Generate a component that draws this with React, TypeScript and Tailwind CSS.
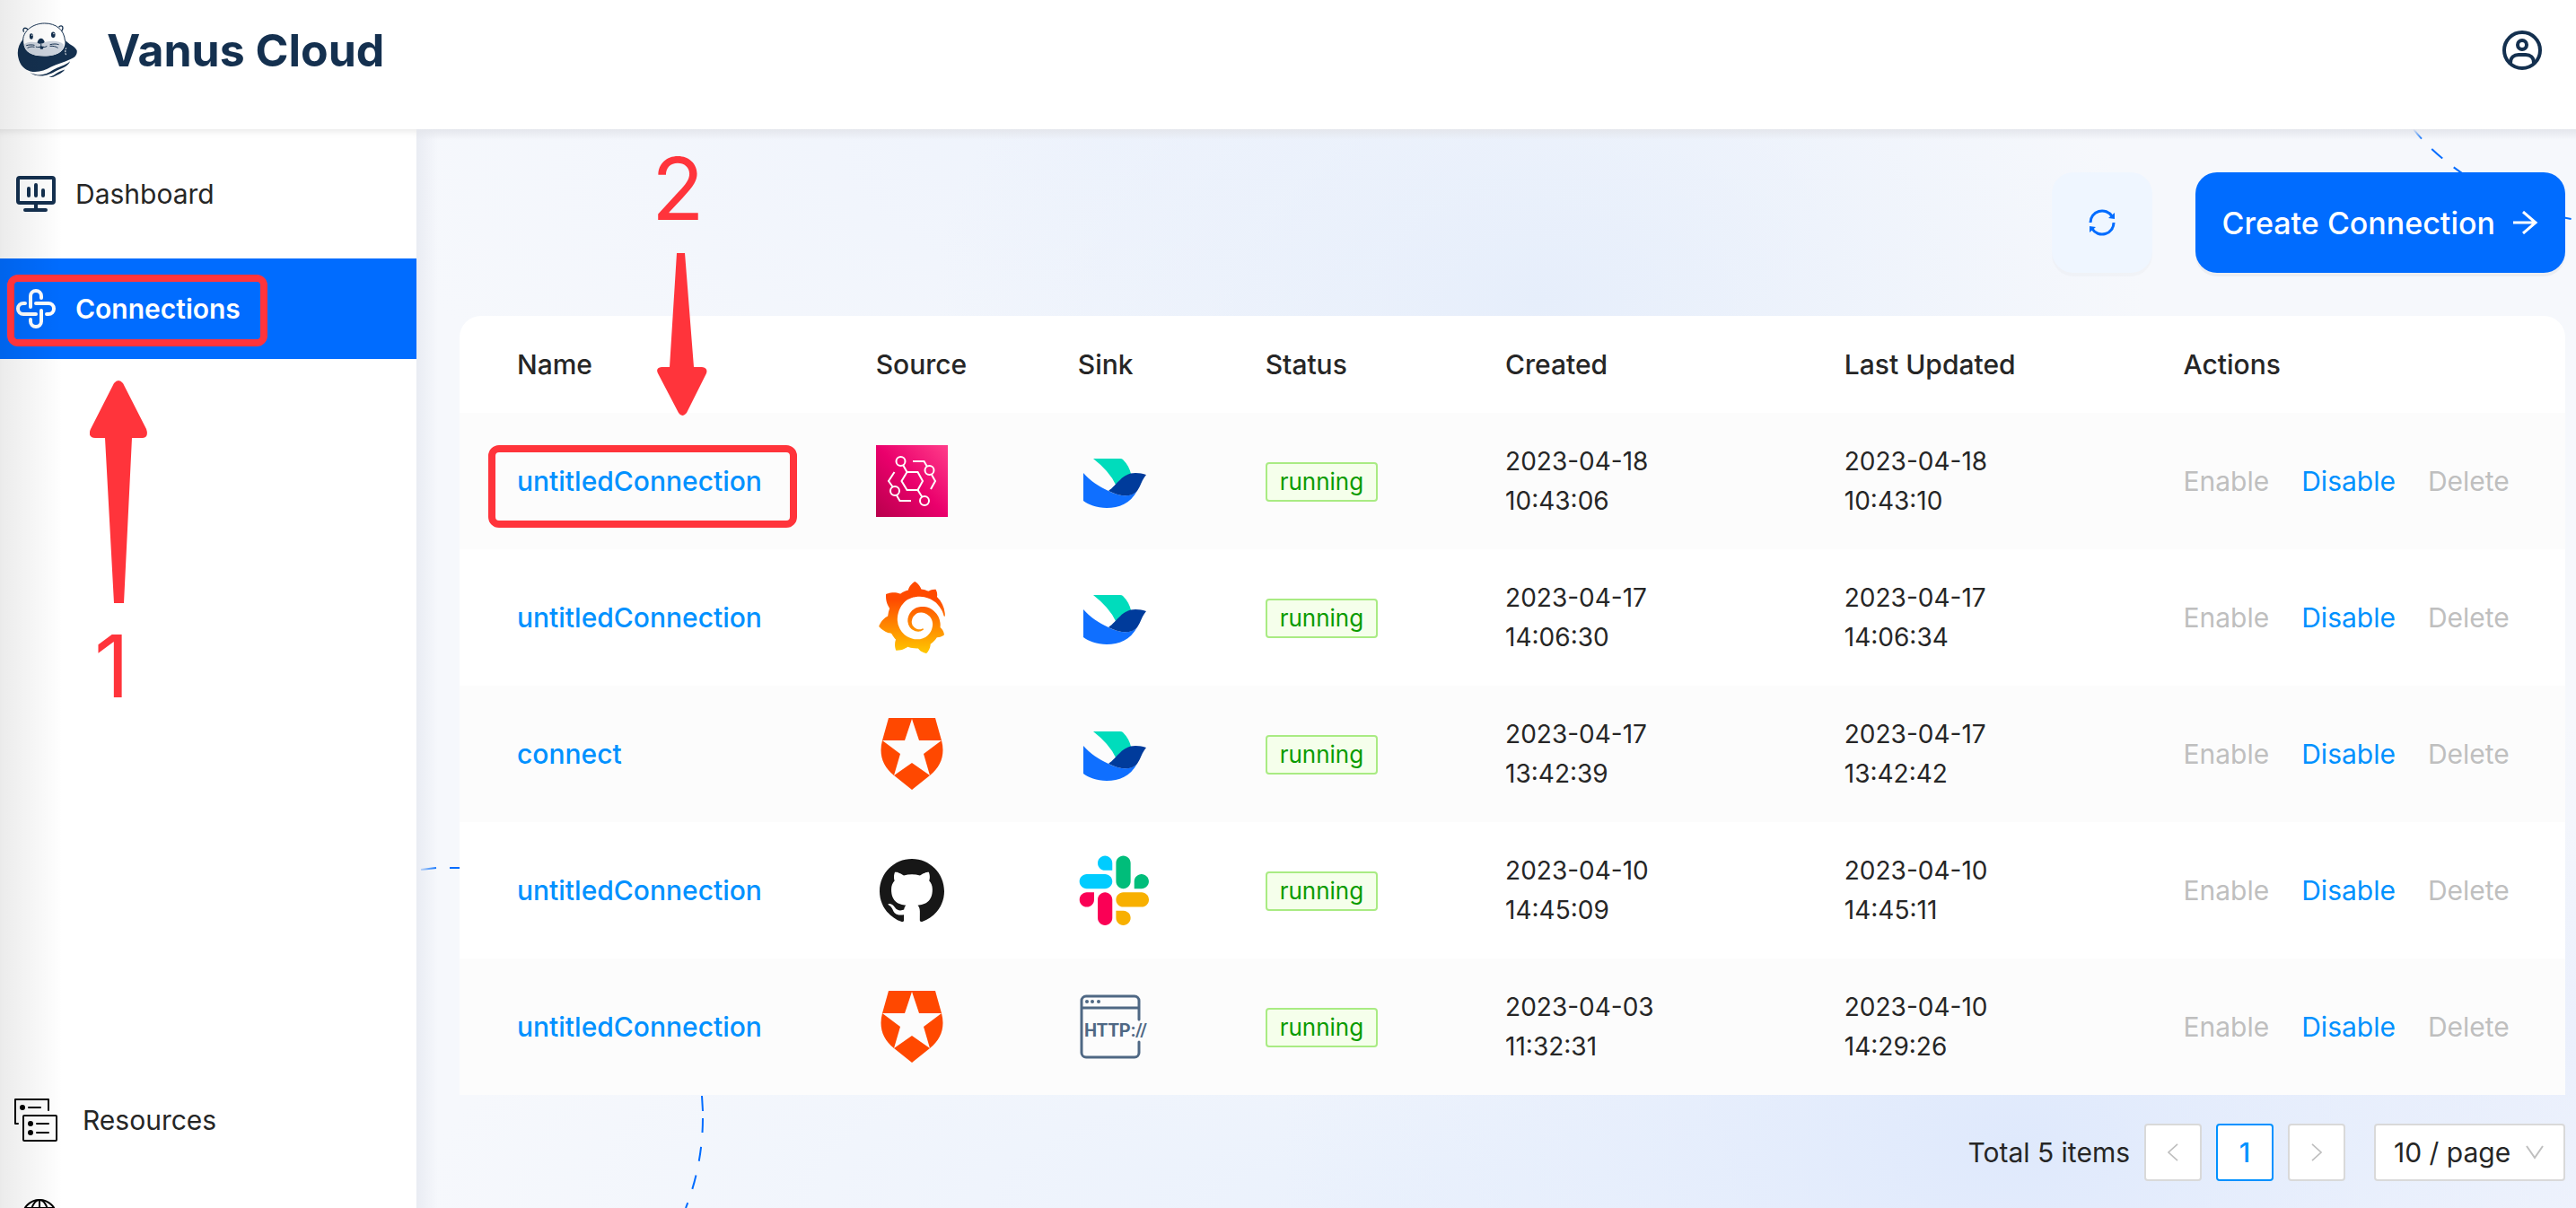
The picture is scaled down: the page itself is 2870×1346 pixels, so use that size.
import React from "react";
import { SiGithub, SiGrafana } from "react-icons/si";

function OtterLogo() {
  return (
    <svg viewBox="26 22 204 188" className="h-[62px] w-[68px]" aria-hidden="true">
      <path
        d="M46 78C30 96 24 118 29 140C34 166 50 181 70 187C96 192 118 184 140 172C160 162 186 156 205 146C220 142 229 130 227 117C222 102 200 98 184 78Z"
        fill="#14304f"
      />
      <path
        d="M48 54c-4-6-2-13 4-13 4 0 7 2 9 5M166 38c4-5 11-6 13-1 2 5-1 10-3 14"
        fill="#fff"
        stroke="#14304f"
        strokeWidth="4"
      />
      <path
        d="M47 92C42 52 78 25 118 25C160 25 186 48 187 88C188 120 160 135 116 136C74 136 50 122 47 92Z"
        fill="#fff"
      />
      <path
        d="M45 88C42 52 78 25 118 25C156 25 184 46 187 84"
        fill="none"
        stroke="#14304f"
        strokeWidth="3"
      />
      <path
        d="M48 98C58 84 84 86 105 94C130 82 168 82 182 96C184 124 154 135 116 135C74 135 52 122 48 98Z"
        fill="#cdd4de"
      />
      <ellipse cx="73" cy="69" rx="6" ry="10" fill="#14304f" />
      <ellipse cx="147" cy="64" rx="7" ry="10" fill="#14304f" />
      <circle cx="75" cy="65" r="2" fill="#fff" />
      <circle cx="149" cy="60" r="2" fill="#fff" />
      <path d="M93 90C96 80 101 76 106 76C111 76 117 82 118 89C112 95 99 96 93 90Z" fill="#14304f" />
      <path d="M101 103h14l-3 9h-8z" fill="#14304f" />
      <path
        d="M106 94v9M88 104c7 3 13 2 18-1c7 4 14 3 20-1M56 100c10-3 20-3 28-1M60 108c8-4 16-5 24-3M136 97c12-3 22-3 30 0M136 102c10-1 20 1 27 6"
        fill="none"
        stroke="#14304f"
        strokeWidth="3"
      />
      <path d="M191 108c-4 6-4 18 0 26" fill="none" stroke="#fff" strokeWidth="3" strokeDasharray="6 3" />
      <path
        d="M68 190C96 206 122 200 146 183C166 170 188 168 204 153C198 170 178 176 160 184C136 198 98 214 68 190Z"
        fill="#14304f"
      />
      <path d="M133 206C150 204 156 190 186 181C178 194 164 196 152 204C146 208 139 208 133 206Z" fill="#14304f" />
    </svg>
  );
}

function UserIcon() {
  return (
    <svg viewBox="0 0 44 44" className="size-11" fill="none" stroke="#14304f" strokeWidth="4" aria-hidden="true">
      <circle cx="22" cy="22" r="20" />
      <circle cx="22" cy="16" r="5" />
      <path d="M9 36C9 30 13 27 18 27H26C31 27 35 30 35 36" />
    </svg>
  );
}

function DashboardIcon() {
  return (
    <svg
      viewBox="0 0 44 40"
      className="h-10 w-11"
      fill="none"
      stroke="#14304f"
      strokeWidth="4"
      strokeLinecap="round"
      aria-hidden="true"
    >
      <rect x="2" y="2" width="40" height="28" rx="2" />
      <path d="M14 14v8M22 10v12M30 16v6M22 30v8M10 38h23" />
    </svg>
  );
}

function ConnectionsIcon() {
  return (
    <svg
      viewBox="0 0 44 44"
      className="size-11"
      fill="none"
      stroke="#fff"
      strokeWidth="4"
      strokeLinecap="round"
      aria-hidden="true"
    >
      <path d="M16 20V8a6 6 0 0 1 12 0V10M22 16H36a6 6 0 0 1 0 12H34M28 24V36a6 6 0 0 1-12 0V34M22 28H8a6 6 0 0 1 0-12H10" />
    </svg>
  );
}

function ResourcesIcon() {
  return (
    <svg
      viewBox="0 0 48 48"
      className="size-12"
      fill="none"
      stroke="#000"
      strokeWidth="2"
      strokeLinecap="round"
      strokeLinejoin="round"
      aria-hidden="true"
    >
      <path d="M4 28H1V1H38V13M16 10H29" />
      <rect x="10" y="19" width="37" height="28" rx="1" />
      <path d="M25 28H38M25 38H38" />
      <g fill="#000" stroke="none">
        <circle cx="9" cy="10" r="3" />
        <circle cx="18" cy="28" r="3" />
        <circle cx="18" cy="38" r="3" />
      </g>
    </svg>
  );
}

function GlobeIcon() {
  return (
    <svg viewBox="0 0 40 40" className="size-10" fill="none" stroke="#000" strokeWidth="2" aria-hidden="true">
      <circle cx="20" cy="20" r="19" />
      <ellipse cx="20" cy="20" rx="10" ry="19" />
      <path d="M20 1v38M1 20h38M4 10h32M4 30h32" />
    </svg>
  );
}

function RefreshIcon() {
  return (
    <svg viewBox="0 0 30 30" className="size-[30px]" fill="none" stroke="#006cff" strokeWidth="3" aria-hidden="true">
      <path d="M2 15A13 13 0 0 1 26 8M28 15A13 13 0 0 1 4 22" />
      <path d="M29 4V11L22 10ZM1 26V19L8 20Z" fill="#006cff" stroke="none" />
    </svg>
  );
}

function ArrowRightIcon() {
  return (
    <svg viewBox="0 0 28 26" className="h-[26px] w-7" fill="none" stroke="#fff" strokeWidth="3" aria-hidden="true">
      <path d="M0 13H25M11 1L25 13L11 25" />
    </svg>
  );
}

function EventBridgeIcon() {
  return (
    <svg viewBox="0 0 80 80" className="size-20" role="img" aria-label="Amazon EventBridge">
      <defs>
        <linearGradient id="eventbridge" x1="0" y1="1" x2="1" y2="0">
          <stop offset="0" stopColor="#b8004c" />
          <stop offset="0.5" stopColor="#ea006c" />
          <stop offset="1" stopColor="#ff3d8a" />
        </linearGradient>
      </defs>
      <rect width="80" height="80" fill="url(#eventbridge)" />
      <g fill="none" stroke="#fff" strokeWidth="2">
        <path d="M34.500 30H46.500L52 40L46.500 50H34.500L28.500 40Z" />
        <circle cx="27.500" cy="18" r="5" />
        <circle cx="59.500" cy="28" r="5" />
        <circle cx="21" cy="51" r="5" />
        <circle cx="54" cy="62" r="5" />
        <path d="M30 22L34.500 30M46.500 50L51.500 58M41 18H53.500L57 24M62 33L66 40L61 49M20.500 30L14 40L19 47M23 56L26.500 62H39" />
      </g>
    </svg>
  );
}

function GrafanaIcon() {
  return (
    <>
      <svg width="0" height="0" className="absolute" aria-hidden="true">
        <defs>
          <linearGradient id="grafana" x1="0" y1="0" x2="0" y2="1">
            <stop offset="0.250" stopColor="#ff4a00" />
            <stop offset="1" stopColor="#ffc800" />
          </linearGradient>
        </defs>
      </svg>
      <SiGrafana className="size-20" fill="url(#grafana)" role="img" aria-label="Grafana" />
    </>
  );
}

function Auth0Icon() {
  return (
    <svg viewBox="-5 0 80 80" className="size-20" role="img" aria-label="Auth0">
      <path
        fillRule="evenodd"
        fill="#ff4800"
        d="M9 0H61L68 25C72 40 68 54 55 64L35 80L15 64C2 54-2 40 2 25ZM35 1L27 25H2L22 40L15 64L35 50L55 64L48 40L68 25H43Z"
      />
    </svg>
  );
}

function GithubIcon() {
  return (
    <span className="flex size-20 items-center justify-center">
      <SiGithub className="size-[72px]" fill="#171717" role="img" aria-label="GitHub" />
    </span>
  );
}

function FeishuIcon() {
  return (
    <svg viewBox="-6 -15 80 80" className="size-20" role="img" aria-label="Feishu">
      <path d="M11 0H41Q43 0 44 1Q51 8 53 17Q45 19 36 29Q29 14 11 0Z" fill="#00dcbc" />
      <path d="M0 16C8 25 17 31 28 36C40 42 52 44 60 36C52 50 40 55 26 55C15 55 5 51 0 47Z" fill="#0f6fff" />
      <path d="M28 36C38 29 43 16 58 16Q65 16 70 18C65 24 64 30 60 36C54 43 42 43 28 36Z" fill="#003b9b" />
    </svg>
  );
}

function SlackIcon() {
  return (
    <svg viewBox="-2 -2 130 130" className="size-20" role="img" aria-label="Slack">
      <path
        fill="#fa0055"
        d="M27.200 80c0 7.300-5.900 13.200-13.200 13.200C6.700 93.200.8 87.300.8 80c0-7.300 5.900-13.200 13.200-13.200h13.200V80zm6.600 0c0-7.300 5.900-13.200 13.200-13.200 7.300 0 13.200 5.900 13.200 13.200v33c0 7.300-5.900 13.200-13.200 13.200-7.300 0-13.200-5.900-13.200-13.200V80z"
      />
      <path
        fill="#00ccff"
        d="M47 27c-7.300 0-13.200-5.900-13.200-13.200C33.800 6.500 39.700.6 47 .6c7.300 0 13.200 5.900 13.200 13.200V27H47zm0 6.700c7.300 0 13.200 5.900 13.200 13.200 0 7.300-5.900 13.200-13.200 13.200H13.900C6.600 60.100.7 54.200.7 46.900c0-7.300 5.900-13.200 13.200-13.200H47z"
      />
      <path
        fill="#00bd7a"
        d="M99.900 46.900c0-7.300 5.900-13.200 13.200-13.200 7.300 0 13.200 5.900 13.200 13.200 0 7.300-5.900 13.200-13.200 13.200H99.900V46.900zm-6.600 0c0 7.300-5.900 13.200-13.200 13.200-7.300 0-13.200-5.900-13.200-13.200V13.800C66.900 6.500 72.800.6 80.100.6c7.300 0 13.200 5.900 13.200 13.200v33.100z"
      />
      <path
        fill="#f8b000"
        d="M80.100 99.800c7.300 0 13.200 5.900 13.200 13.200 0 7.300-5.900 13.200-13.200 13.200-7.300 0-13.200-5.900-13.200-13.200V99.800h13.200zm0-6.600c-7.300 0-13.200-5.900-13.200-13.200 0-7.300 5.900-13.200 13.200-13.200h33.100c7.300 0 13.200 5.900 13.200 13.200 0 7.300-5.900 13.200-13.200 13.200H80.100z"
      />
    </svg>
  );
}

function HttpIcon() {
  return (
    <svg viewBox="-2 -4 80 80" className="size-20" role="img" aria-label="HTTP">
      <path
        d="M66 28V7a5 5 0 0 0-5-5H7a5 5 0 0 0-5 5V65a5 5 0 0 0 5 5H61a5 5 0 0 0 5-5V53M2 15H66"
        fill="none"
        stroke="#4f6884"
        strokeWidth="3"
        strokeLinecap="round"
      />
      <g fill="#4f6884">
        <circle cx="8" cy="8" r="2" />
        <circle cx="14" cy="8" r="2" />
        <circle cx="21" cy="8" r="2" />
        <text x="5" y="47" fontSize="20" fontWeight="700" fontFamily="Roboto, sans-serif">
          HTTP://
        </text>
      </g>
    </svg>
  );
}

type Connection = {
  name: string;
  source: React.ReactNode;
  sink: React.ReactNode;
  created: [string, string];
  updated: [string, string];
};

const connections: Connection[] = [
  {
    name: "untitledConnection",
    source: <EventBridgeIcon />,
    sink: <FeishuIcon />,
    created: ["2023-04-18", "10:43:06"],
    updated: ["2023-04-18", "10:43:10"],
  },
  {
    name: "untitledConnection",
    source: <GrafanaIcon />,
    sink: <FeishuIcon />,
    created: ["2023-04-17", "14:06:30"],
    updated: ["2023-04-17", "14:06:34"],
  },
  {
    name: "connect",
    source: <Auth0Icon />,
    sink: <FeishuIcon />,
    created: ["2023-04-17", "13:42:39"],
    updated: ["2023-04-17", "13:42:42"],
  },
  {
    name: "untitledConnection",
    source: <GithubIcon />,
    sink: <SlackIcon />,
    created: ["2023-04-10", "14:45:09"],
    updated: ["2023-04-10", "14:45:11"],
  },
  {
    name: "untitledConnection",
    source: <Auth0Icon />,
    sink: <HttpIcon />,
    created: ["2023-04-03", "11:32:31"],
    updated: ["2023-04-10", "14:29:26"],
  },
];

function DateTime({ value }: { value: [string, string] }) {
  return (
    <time className="block text-[28px]">
      {value[0]}
      <br />
      {value[1]}
    </time>
  );
}

function ConnectionsTable() {
  return (
    <table className="w-full table-fixed overflow-hidden rounded-t-3xl bg-white text-left text-3xl leading-[44px]">
      <colgroup>
        <col className="w-[18.4%]" />
        <col className="w-[9.6%]" />
        <col className="w-[8.9%]" />
        <col className="w-[11.4%]" />
        <col className="w-[16.1%]" />
        <col className="w-[16.1%]" />
        <col />
      </colgroup>
      <thead>
        <tr className="h-[108px]">
          <th className="pl-16 font-medium">Name</th>
          <th className="pl-8 font-medium">Source</th>
          <th className="pl-8 font-medium">Sink</th>
          <th className="pl-8 font-medium">Status</th>
          <th className="pl-8 font-medium">Created</th>
          <th className="pl-8 font-medium">Last Updated</th>
          <th className="pl-8 font-medium">Actions</th>
        </tr>
      </thead>
      <tbody>
        {connections.map((c, i) => (
          <tr key={i} className="h-[152px] first:bg-[#fafafa] odd:bg-[#fcfcfc]">
            <td className="pl-16">
              <a href="#connection" className="font-medium text-[#0091ff]">
                {c.name}
              </a>
            </td>
            <td className="pl-8">{c.source}</td>
            <td className="pl-8">{c.sink}</td>
            <td className="pl-8">
              <span className="inline-block rounded-sm border-2 border-[#a9eb83] bg-[#f5ffeb] px-3.5 align-middle text-[26px] leading-10 text-[#0a9b00]">
                running
              </span>
            </td>
            <td className="pl-8">
              <DateTime value={c.created} />
            </td>
            <td className="pl-8">
              <DateTime value={c.updated} />
            </td>
            <td className="pl-8">
              <div className="flex gap-9">
                <button type="button" disabled className="text-[#bfbfbf]">
                  Enable
                </button>
                <button type="button" className="text-[#0091ff]">
                  Disable
                </button>
                <button type="button" disabled className="text-[#bfbfbf]">
                  Delete
                </button>
              </div>
            </td>
          </tr>
        ))}
      </tbody>
    </table>
  );
}

function Pagination() {
  return (
    <nav aria-label="Pagination" className="mt-8 flex items-center justify-end text-3xl leading-[44px]">
      <span className="mr-4">Total 5 items</span>
      <button
        type="button"
        disabled
        aria-label="Previous page"
        className="mr-4 flex size-16 items-center justify-center rounded-sm border-2 border-[#d9d9d9] bg-white"
      >
        <svg viewBox="0 0 14 24" className="h-5 w-3" fill="none" stroke="#bfbfbf" strokeWidth="2">
          <path d="M13 1L1 12L13 23" />
        </svg>
      </button>
      <button
        type="button"
        aria-current="page"
        className="mr-4 flex size-16 items-center justify-center rounded-sm border-2 border-[#0091ff] bg-white font-medium text-[#0091ff]"
      >
        1
      </button>
      <button
        type="button"
        disabled
        aria-label="Next page"
        className="mr-8 flex size-16 items-center justify-center rounded-sm border-2 border-[#d9d9d9] bg-white"
      >
        <svg viewBox="0 0 14 24" className="h-5 w-3" fill="none" stroke="#bfbfbf" strokeWidth="2">
          <path d="M1 1L13 12L1 23" />
        </svg>
      </button>
      <div className="relative">
        <select
          aria-label="Page size"
          className="h-16 w-[213px] appearance-none rounded-sm border-2 border-[#d9d9d9] bg-white pl-5 text-[#262626]"
        >
          <option>10 / page</option>
        </select>
        <svg
          viewBox="0 0 20 16"
          className="pointer-events-none absolute top-6 right-6 h-4 w-5"
          fill="none"
          stroke="#bfbfbf"
          strokeWidth="2"
          aria-hidden="true"
        >
          <path d="M1 1L10 14L19 1" />
        </svg>
      </div>
    </nav>
  );
}

function Backdrop() {
  return (
    <div className="pointer-events-none absolute inset-0 overflow-hidden bg-[#f6f8fc]" aria-hidden="true">
      <div className="absolute inset-0 bg-[radial-gradient(ellipse_28%_40%_at_52%_16%,#e6eefb_0%,#e6eefb00_100%),radial-gradient(ellipse_34%_45%_at_74%_94%,#dfe9fc_0%,#dfe9fc00_100%),radial-gradient(ellipse_34%_40%_at_32%_0%,#eef3fc_0%,#eef3fc00_100%),radial-gradient(ellipse_45%_30%_at_45%_100%,#eaf1fc_0%,#eaf1fc00_100%),radial-gradient(ellipse_20%_30%_at_98%_85%,#edf1fc_0%,#edf1fc00_100%)]" />
      <svg
        viewBox="0 0 190 120"
        className="absolute top-0 right-0 h-[120px] w-[190px]"
        fill="none"
        stroke="#006cff"
        strokeWidth="2"
      >
        <path d="M9 0C40 40 110 88 190 101" strokeDasharray="16 16" strokeDashoffset="2" />
      </svg>
      <svg
        viewBox="0 0 340 400"
        className="absolute bottom-0 left-0 h-[400px] w-[340px]"
        fill="none"
        stroke="#006cff"
        strokeWidth="2"
      >
        <path d="M5 23L22 21M37 21H50M318 275L319 292" />
        <path d="M319 300A275 275 0 0 1 300 400" strokeDasharray="16 16" />
      </svg>
      <div className="absolute inset-y-0 left-0 w-6 bg-linear-to-r from-[#e9ecf3] to-transparent" />
      <div className="absolute inset-x-0 top-0 h-3 bg-linear-to-b from-[#e4e6ec] to-transparent" />
    </div>
  );
}

/* Numbered red markers laid over the page. */
function Annotations() {
  return (
    <div className="pointer-events-none absolute inset-0 z-30 text-[#ff343b]">
      <div className="absolute top-[306px] left-2 h-20 w-[290px] rounded-xl border-8 border-current" />
      <svg viewBox="0 0 64 248" className="absolute top-[424px] left-[100px] h-[248px] w-16" fill="currentColor">
        <path d="M27 3Q32-3 37 3L63 54Q66 63 59 64H47L38 248H27L17 64H6Q-3 63 1 54Z" />
      </svg>
      <span className="absolute top-[684px] left-[105px] text-[96px] leading-[116px]">1</span>
      <span className="absolute top-[152px] left-[726px] text-[96px] leading-[116px]">2</span>
      <svg viewBox="0 0 56 182" className="absolute top-[282px] left-[732px] h-[182px] w-14" fill="currentColor">
        <path d="M22 0H31L41 127H50Q57 128 55 134L33 178Q28 184 24 178L1 134Q-2 128 5 127H14Z" />
      </svg>
      <div className="absolute top-[496px] left-[544px] h-[92px] w-[344px] rounded-xl border-8 border-current" />
    </div>
  );
}

export default function App() {
  return (
    <div className="relative flex h-screen flex-col overflow-hidden bg-white font-[Inter,'Noto_Sans',sans-serif] text-[#262626]">
      <header className="relative z-10 flex h-36 shrink-0 items-center justify-between bg-white pt-1 pr-[38px] pb-9 pl-[19px]">
        <a href="#home" className="flex items-center gap-8 text-[50px] leading-[60px] font-bold text-[#14304f]">
          <OtterLogo />
          Vanus Cloud
        </a>
        <button type="button" aria-label="Account">
          <UserIcon />
        </button>
      </header>

      <div className="flex min-h-0 flex-1">
        <aside className="relative flex w-[464px] shrink-0 flex-col overflow-hidden bg-white pt-4 text-3xl leading-[44px] shadow-[inset_0_8px_8px_-6px_#0000001a]">
          <nav className="flex flex-col gap-4">
            <a href="#dashboard" className="flex h-28 items-center gap-[22px] pl-[18px]">
              <DashboardIcon />
              Dashboard
            </a>
            <a
              href="#connections"
              aria-current="page"
              className="flex h-28 items-center gap-[22px] bg-[#006cff] pl-[18px] font-semibold text-white"
            >
              <ConnectionsIcon />
              Connections
            </a>
          </nav>
          <nav className="mt-auto h-[154px] shrink-0 overflow-hidden">
            <a href="#resources" className="flex h-28 items-center gap-7 pl-4">
              <ResourcesIcon />
              Resources
            </a>
            <a href="#language" aria-label="Language" className="flex h-[104px] items-center pl-6">
              <GlobeIcon />
            </a>
          </nav>
        </aside>

        <main className="relative min-w-0 flex-1">
          <Backdrop />
          <div className="relative pt-12 pr-3 pl-12">
            <div className="mb-12 flex justify-end gap-12">
              <button
                type="button"
                aria-label="Refresh"
                className="flex size-28 items-center justify-center rounded-3xl bg-[#eff6ff] shadow-[0_4px_0_#00000005]"
              >
                <RefreshIcon />
              </button>
              <button
                type="button"
                className="flex h-28 items-center gap-5 rounded-3xl bg-[#006cff] px-[30px] text-[34px] font-medium text-white shadow-[0_4px_0_#0000000a]"
              >
                Create Connection
                <ArrowRightIcon />
              </button>
            </div>
            <ConnectionsTable />
            <Pagination />
          </div>
        </main>
      </div>

      <div className="pointer-events-none absolute inset-y-0 left-0 z-20 w-[70px] bg-linear-to-r from-[#00000014] to-transparent" />
      <Annotations />
    </div>
  );
}
